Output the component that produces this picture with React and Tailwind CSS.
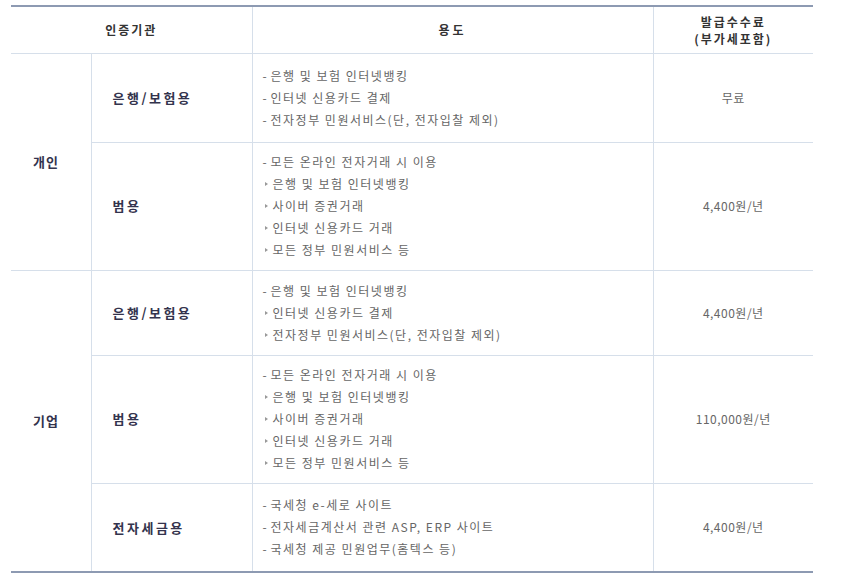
import React from 'react';

const rows = [
  {
    group: '개인',
    span: 2,
    type: '은행/보험용',
    height: 'h-[89px]',
    uses: [
      ['-', '은행 및 보험 인터넷뱅킹'],
      ['-', '인터넷 신용카드 결제'],
      ['-', '전자정부 민원서비스(단, 전자입찰 제외)'],
    ],
    fee: '무료',
  },
  {
    type: '범용',
    height: 'h-[128px]',
    uses: [
      ['-', '모든 온라인 전자거래 시 이용'],
      ['>', '은행 및 보험 인터넷뱅킹'],
      ['>', '사이버 증권거래'],
      ['>', '인터넷 신용카드 거래'],
      ['>', '모든 정부 민원서비스 등'],
    ],
    fee: '4,400원/년',
  },
  {
    group: '기업',
    span: 3,
    type: '은행/보험용',
    height: 'h-[85px]',
    uses: [
      ['-', '은행 및 보험 인터넷뱅킹'],
      ['>', '인터넷 신용카드 결제'],
      ['>', '전자정부 민원서비스(단, 전자입찰 제외)'],
    ],
    fee: '4,400원/년',
  },
  {
    type: '범용',
    height: 'h-[128px]',
    uses: [
      ['-', '모든 온라인 전자거래 시 이용'],
      ['>', '은행 및 보험 인터넷뱅킹'],
      ['>', '사이버 증권거래'],
      ['>', '인터넷 신용카드 거래'],
      ['>', '모든 정부 민원서비스 등'],
    ],
    fee: '110,000원/년',
  },
  {
    type: '전자세금용',
    height: 'h-[89px]',
    uses: [
      ['-', '국세청 e-세로 사이트'],
      ['-', '전자세금계산서 관련 ASP, ERP 사이트'],
      ['-', '국세청 제공 민원업무(홈텍스 등)'],
    ],
    fee: '4,400원/년',
  },
];

function UseLine({ mark, text }) {
  if (mark === '-') {
    return (
      <div className="flex leading-[22px]">
        <span className="w-[8px]">-</span>
        <span>{text}</span>
      </div>
    );
  }
  // small gray triangle bullet
  return (
    <div className="flex items-center leading-[22px]">
      <span className="w-[10px] pl-[2px] flex items-center">
        <span className="block w-0 h-0 border-l-[3px] border-l-[#999] border-y-[2.5px] border-y-transparent" />
      </span>
      <span>{text}</span>
    </div>
  );
}

export default function App() {
  return (
    <div className="bg-white w-[841px] h-[577px] pt-[5px] pl-[11px]" style={{ fontFamily: '"Noto Sans CJK KR", "Noto Sans", sans-serif' }}>
      <table className="w-[802px] table-fixed border-collapse border-t-2 border-b-2 border-[#8d9ab2] text-[12px] text-[#666]">
        <colgroup>
          <col className="w-[80px]" />
          <col className="w-[161px]" />
          <col className="w-[401px]" />
          <col className="w-[160px]" />
        </colgroup>
        <thead>
          <tr className="h-[47px] border-b border-[#d6dfea]">
            <th colSpan={2} className="font-bold text-[#333] text-center tracking-[2px]">인증기관</th>
            <th className="font-bold text-[#333] text-center tracking-[3px] border-l border-[#d6dfea]">용도</th>
            <th className="font-bold text-[#333] text-center tracking-[2px] border-l border-[#d6dfea] leading-[17px]">
              발급수수료
              <br />
              (부가세포함)
            </th>
          </tr>
        </thead>
        <tbody>
          {rows.map((r, i) => (
            <tr key={i} className={`${r.height} border-b border-[#d6dfea]`}>
              {r.group && (
                <td rowSpan={r.span} className="pl-[22px] font-bold text-[#33334d] text-[13px] tracking-[1px] align-middle">
                  {r.group}
                </td>
              )}
              <td className="pl-[21px] font-bold text-[#33334d] text-[13px] tracking-[2.5px] border-l border-[#d6dfea] align-middle">
                {r.type}
              </td>
              <td className="pl-[10px] tracking-[1.5px] border-l border-[#d6dfea] align-middle">
                {r.uses.map(([m, t], j) => (
                  <UseLine key={j} mark={m} text={t} />
                ))}
              </td>
              <td className="text-center tracking-[0.5px] border-l border-[#d6dfea] align-middle">{r.fee}</td>
            </tr>
          ))}
        </tbody>
      </table>
    </div>
  );
}
